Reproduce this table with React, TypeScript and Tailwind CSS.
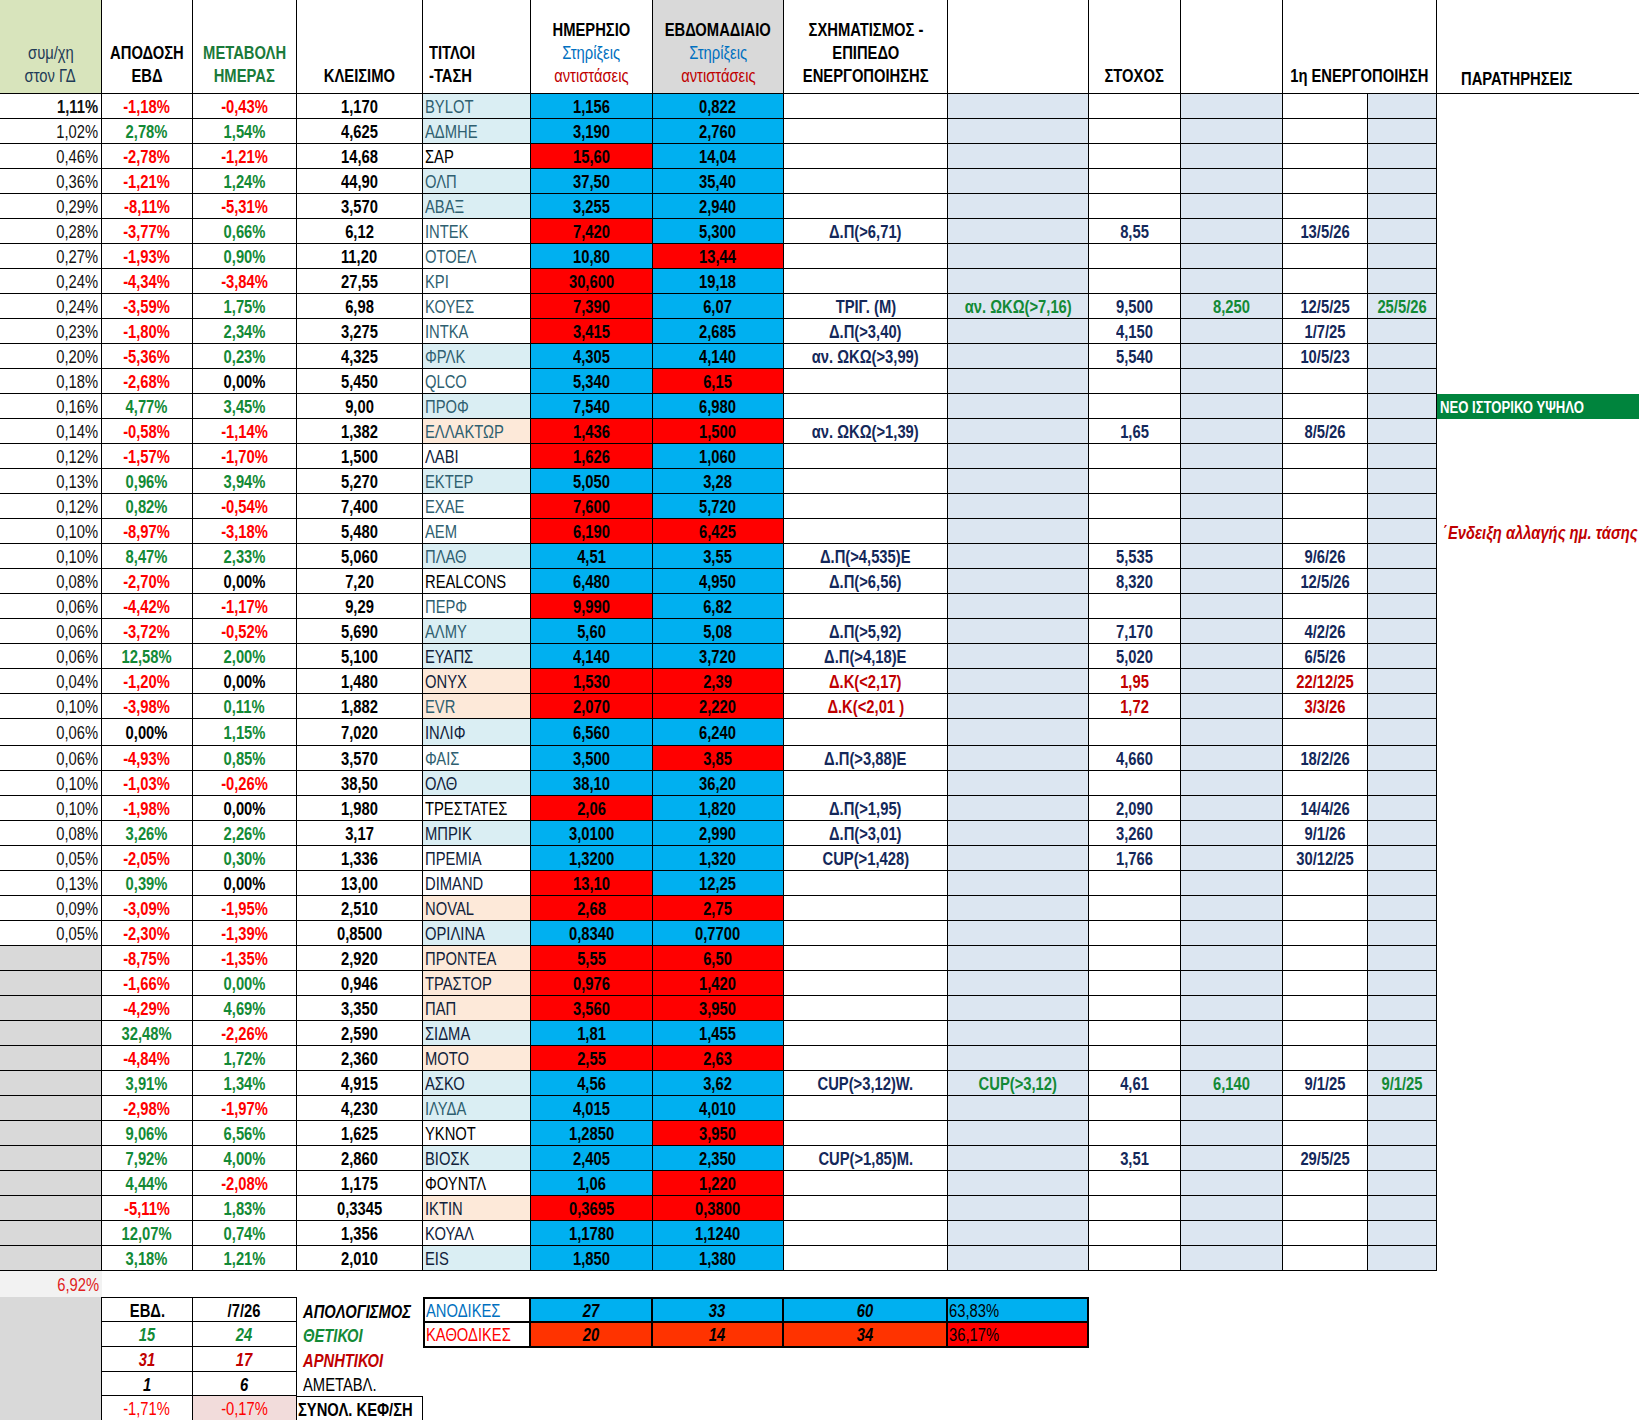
import clsx from 'clsx';

const W = [
  'w-[102px]',
  'w-[91px]',
  'w-[104px]',
  'w-[126px]',
  'w-[108px]',
  'w-[122px]',
  'w-[131px]',
  'w-[164px]',
  'w-[141px]',
  'w-[92px]',
  'w-[102px]',
  'w-[85px]',
  'w-[69px]',
];

// [συμ/χη, απόδοση, μεταβολή, κλείσιμο, τίτλος, bg+text, ημερήσιο, εβδομαδιαίο] — "!" = red cell
const rows: string[][] = [
  ['1,11%', '-1,18%', '-0,43%', '1,170', 'BYLOT', 'bt', '1,156', '0,822'],
  ['1,02%', '2,78%', '1,54%', '4,625', 'ΑΔΜΗΕ', 'bt', '3,190', '2,760'],
  ['0,46%', '-2,78%', '-1,21%', '14,68', 'ΣΑΡ', 'wk', '!15,60', '14,04'],
  ['0,36%', '-1,21%', '1,24%', '44,90', 'ΟΛΠ', 'bt', '37,50', '35,40'],
  ['0,29%', '-8,11%', '-5,31%', '3,570', 'ΑΒΑΞ', 'bt', '3,255', '2,940'],
  ['0,28%', '-3,77%', '0,66%', '6,12', 'ΙΝΤΕΚ', 'wt', '!7,420', '5,300'],
  ['0,27%', '-1,93%', '0,90%', '11,20', 'ΟΤΟΕΛ', 'wt', '10,80', '!13,44'],
  ['0,24%', '-4,34%', '-3,84%', '27,55', 'ΚΡΙ', 'wt', '!30,600', '19,18'],
  ['0,24%', '-3,59%', '1,75%', '6,98', 'ΚΟΥΕΣ', 'wt', '!7,390', '6,07'],
  ['0,23%', '-1,80%', '2,34%', '3,275', 'ΙΝΤΚΑ', 'wt', '!3,415', '2,685'],
  ['0,20%', '-5,36%', '0,23%', '4,325', 'ΦΡΛΚ', 'bt', '4,305', '4,140'],
  ['0,18%', '-2,68%', '0,00%', '5,450', 'QLCO', 'wt', '5,340', '!6,15'],
  ['0,16%', '4,77%', '3,45%', '9,00', 'ΠΡΟΦ', 'bt', '7,540', '6,980'],
  ['0,14%', '-0,58%', '-1,14%', '1,382', 'ΕΛΛΑΚΤΩΡ', 'pt', '!1,436', '!1,500'],
  ['0,12%', '-1,57%', '-1,70%', '1,500', 'ΛΑΒΙ', 'wd', '!1,626', '1,060'],
  ['0,13%', '0,96%', '3,94%', '5,270', 'ΕΚΤΕΡ', 'bt', '5,050', '3,28'],
  ['0,12%', '0,82%', '-0,54%', '7,400', 'ΕΧΑΕ', 'wt', '!7,600', '5,720'],
  ['0,10%', '-8,97%', '-3,18%', '5,480', 'ΑΕΜ', 'wt', '!6,190', '!6,425'],
  ['0,10%', '8,47%', '2,33%', '5,060', 'ΠΛΑΘ', 'bt', '4,51', '3,55'],
  ['0,08%', '-2,70%', '0,00%', '7,20', 'REALCONS', 'wk', '6,480', '4,950'],
  ['0,06%', '-4,42%', '-1,17%', '9,29', 'ΠΕΡΦ', 'wt', '!9,990', '6,82'],
  ['0,06%', '-3,72%', '-0,52%', '5,690', 'ΑΛΜΥ', 'bt', '5,60', '5,08'],
  ['0,06%', '12,58%', '2,00%', '5,100', 'ΕΥΑΠΣ', 'bd', '4,140', '3,720'],
  ['0,04%', '-1,20%', '0,00%', '1,480', 'ΟΝΥΧ', 'pd', '!1,530', '!2,39'],
  ['0,10%', '-3,98%', '0,11%', '1,882', 'EVR', 'pt', '!2,070', '!2,220'],
  ['0,06%', '0,00%', '1,15%', '7,020', 'ΙΝΛΙΦ', 'bd', '6,560', '6,240'],
  ['0,06%', '-4,93%', '0,85%', '3,570', 'ΦΑΙΣ', 'wt', '3,500', '!3,85'],
  ['0,10%', '-1,03%', '-0,26%', '38,50', 'ΟΛΘ', 'bd', '38,10', '36,20'],
  ['0,10%', '-1,98%', '0,00%', '1,980', 'ΤΡΕΣΤΑΤΕΣ', 'wk', '!2,06', '1,820'],
  ['0,08%', '3,26%', '2,26%', '3,17', 'ΜΠΡΙΚ', 'bd', '3,0100', '2,990'],
  ['0,05%', '-2,05%', '0,30%', '1,336', 'ΠΡΕΜΙΑ', 'wd', '1,3200', '1,320'],
  ['0,13%', '0,39%', '0,00%', '13,00', 'DIMAND', 'wd', '!13,10', '12,25'],
  ['0,09%', '-3,09%', '-1,95%', '2,510', 'NOVAL', 'pd', '!2,68', '!2,75'],
  ['0,05%', '-2,30%', '-1,39%', '0,8500', 'ΟΡΙΛΙΝΑ', 'bd', '0,8340', '0,7700'],
  ['', '-8,75%', '-1,35%', '2,920', 'ΠΡΟΝΤΕΑ', 'pd', '!5,55', '!6,50'],
  ['', '-1,66%', '0,00%', '0,946', 'ΤΡΑΣΤΟΡ', 'pd', '!0,976', '!1,420'],
  ['', '-4,29%', '4,69%', '3,350', 'ΠΑΠ', 'pd', '!3,560', '!3,950'],
  ['', '32,48%', '-2,26%', '2,590', 'ΣΙΔΜΑ', 'bd', '1,81', '1,455'],
  ['', '-4,84%', '1,72%', '2,360', 'ΜΟΤΟ', 'pd', '!2,55', '!2,63'],
  ['', '3,91%', '1,34%', '4,915', 'ΑΣΚΟ', 'bd', '4,56', '3,62'],
  ['', '-2,98%', '-1,97%', '4,230', 'ΙΛΥΔΑ', 'bt', '4,015', '4,010'],
  ['', '9,06%', '6,56%', '1,625', 'ΥΚΝΟΤ', 'wk', '1,2850', '!3,950'],
  ['', '7,92%', '4,00%', '2,860', 'ΒΙΟΣΚ', 'bd', '2,405', '2,350'],
  ['', '4,44%', '-2,08%', '1,175', 'ΦΟΥΝΤΛ', 'wk', '1,06', '!1,220'],
  ['', '-5,11%', '1,83%', '0,3345', 'ΙΚΤΙΝ', 'pd', '!0,3695', '!0,3800'],
  ['', '12,07%', '0,74%', '1,356', 'ΚΟΥΑΛ', 'wd', '1,1780', '1,1240'],
  ['', '3,18%', '1,21%', '2,010', 'EIS', 'bd', '1,850', '1,380'],
];

type Extra = {
  sx?: string;
  sx2?: string;
  tg?: string;
  tg2?: string;
  e1?: string;
  e2?: string;
  red?: boolean;
};

const extras: Record<string, Extra> = {
  ΙΝΤΕΚ: { sx: 'Δ.Π(>6,71)', tg: '8,55', e1: '13/5/26' },
  ΚΟΥΕΣ: { sx: 'ΤΡΙΓ. (Μ)', sx2: 'αν. ΩΚΩ(>7,16)', tg: '9,500', tg2: '8,250', e1: '12/5/25', e2: '25/5/26' },
  ΙΝΤΚΑ: { sx: 'Δ.Π(>3,40)', tg: '4,150', e1: '1/7/25' },
  ΦΡΛΚ: { sx: 'αν. ΩΚΩ(>3,99)', tg: '5,540', e1: '10/5/23' },
  ΕΛΛΑΚΤΩΡ: { sx: 'αν. ΩΚΩ(>1,39)', tg: '1,65', e1: '8/5/26' },
  ΠΛΑΘ: { sx: 'Δ.Π(>4,535)Ε', tg: '5,535', e1: '9/6/26' },
  REALCONS: { sx: 'Δ.Π(>6,56)', tg: '8,320', e1: '12/5/26' },
  ΑΛΜΥ: { sx: 'Δ.Π(>5,92)', tg: '7,170', e1: '4/2/26' },
  ΕΥΑΠΣ: { sx: 'Δ.Π(>4,18)Ε', tg: '5,020', e1: '6/5/26' },
  ΟΝΥΧ: { sx: 'Δ.Κ(<2,17)', tg: '1,95', e1: '22/12/25', red: true },
  EVR: { sx: 'Δ.Κ(<2,01 )', tg: '1,72', e1: '3/3/26', red: true },
  ΦΑΙΣ: { sx: 'Δ.Π(>3,88)Ε', tg: '4,660', e1: '18/2/26' },
  ΤΡΕΣΤΑΤΕΣ: { sx: 'Δ.Π(>1,95)', tg: '2,090', e1: '14/4/26' },
  ΜΠΡΙΚ: { sx: 'Δ.Π(>3,01)', tg: '3,260', e1: '9/1/26' },
  ΠΡΕΜΙΑ: { sx: 'CUP(>1,428)', tg: '1,766', e1: '30/12/25' },
  ΑΣΚΟ: { sx: 'CUP(>3,12)W.', sx2: 'CUP(>3,12)', tg: '4,61', tg2: '6,140', e1: '9/1/25', e2: '9/1/25' },
  ΒΙΟΣΚ: { sx: 'CUP(>1,85)Μ.', tg: '3,51', e1: '29/5/25' },
};

const pctColor = (v: string, forceGreen = false) => {
  if (v.startsWith('-')) return 'text-[#ff0000]';
  if (v === '0,00%' && !forceGreen) return 'text-black';
  return 'text-[#138a36]';
};

// narrow text: the sheet uses a condensed face, so squeeze Liberation Sans
function N({ children, o = 'c' }: { children?: React.ReactNode; o?: 'l' | 'c' | 'r' }) {
  if (children === undefined || children === '') return null;
  return (
    <span
      className={clsx(
        'inline-block whitespace-nowrap scale-x-[0.82]',
        o === 'l' ? 'origin-left' : o === 'r' ? 'origin-right' : 'origin-center',
      )}
    >
      {children}
    </span>
  );
}

function Cell({
  i,
  className,
  o = 'c',
  children,
}: {
  i: number;
  className?: string;
  o?: 'l' | 'c' | 'r';
  children?: React.ReactNode;
}) {
  return (
    <div
      className={clsx(
        W[i],
        'shrink-0 h-full pt-[2px] border-r border-b border-black flex items-center overflow-hidden whitespace-nowrap',
        o === 'l' ? 'justify-start' : o === 'r' ? 'justify-end' : 'justify-center',
        className,
      )}
    >
      <N o={o}>{children}</N>
    </div>
  );
}

function HeaderRow() {
  const h = 'shrink-0 h-full border-r border-black flex flex-col justify-end items-center leading-[23px] pb-[5px] font-bold whitespace-nowrap';
  return (
    <div className="flex h-[94px] border-b border-black">
      <div className={clsx(W[0], h, 'bg-[#d8e4bc] font-normal text-[#1f3b57]')}>
        <N>συμ/χη</N>
        <N>στον ΓΔ</N>
      </div>
      <div className={clsx(W[1], h)}>
        <N>ΑΠΟΔΟΣΗ</N>
        <N>ΕΒΔ</N>
      </div>
      <div className={clsx(W[2], h, 'text-[#1b7a3a]')}>
        <N>ΜΕΤΑΒΟΛΗ</N>
        <N>ΗΜΕΡΑΣ</N>
      </div>
      <div className={clsx(W[3], h, 'pb-[4px]')}>
        <N>ΚΛΕΙΣΙΜΟ</N>
      </div>
      <div className={clsx(W[4], h, 'items-start pl-[6px]')}>
        <N o="l">ΤΙΤΛΟΙ</N>
        <N o="l">-ΤΑΣΗ</N>
      </div>
      <div className={clsx(W[5], h)}>
        <N>ΗΜΕΡΗΣΙΟ</N>
        <span className="font-normal text-[#0070c0]">
          <N>Στηρίξεις</N>
        </span>
        <span className="font-normal text-[#c00000]">
          <N>αντιστάσεις</N>
        </span>
      </div>
      <div className={clsx(W[6], h, 'bg-[#d9d9d9]')}>
        <N>ΕΒΔΟΜΑΔΙΑΙΟ</N>
        <span className="font-normal text-[#0070c0]">
          <N>Στηρίξεις</N>
        </span>
        <span className="font-normal text-[#c00000]">
          <N>αντιστάσεις</N>
        </span>
      </div>
      <div className={clsx(W[7], h)}>
        <N>ΣΧΗΜΑΤΙΣΜΟΣ -</N>
        <N>ΕΠΙΠΕΔΟ</N>
        <N>ΕΝΕΡΓΟΠΟΙΗΣΗΣ</N>
      </div>
      <div className={clsx(W[8], h)} />
      <div className={clsx(W[9], h, 'pb-[2px]')}>
        <N>ΣΤΟΧΟΣ</N>
      </div>
      <div className={clsx(W[10], h)} />
      <div className={clsx('w-[154px]', h, 'pb-[2px]')}>
        <N>1η ΕΝΕΡΓΟΠΟΙΗΣΗ</N>
      </div>
      <div className="w-[202px] shrink-0 h-full flex flex-col justify-end items-start leading-[23px] pb-[2px] pl-[24px] font-bold">
        <N o="l">ΠΑΡΑΤΗΡΗΣΕΙΣ</N>
      </div>
    </div>
  );
}

function StockRow({ r, idx }: { r: string[]; idx: number }) {
  const [g, a, m, k, t, style, d, w] = r;
  const ex = extras[t] ?? {};
  const tb = style[0] === 'b' ? 'bg-[#daeef3]' : style[0] === 'p' ? 'bg-[#fde9d9]' : 'bg-white';
  const tc = style[1] === 't' ? 'text-[#2f5f70]' : style[1] === 'd' ? 'text-[#10213a]' : 'text-black';
  const dRed = d.startsWith('!');
  const wRed = w.startsWith('!');
  const navy = ex.red ? 'text-[#c00000]' : 'text-[#14285a]';

  return (
    <div className={clsx('flex', t === 'ΙΝΛΙΦ' ? 'h-[27px]' : 'h-[25px]')}>
      <Cell i={0} o="r" className={clsx('pr-[3px] text-[#111]', g === '' && 'bg-[#d9d9d9]', idx === 0 && 'font-bold')}>
        {g}
      </Cell>
      <Cell i={1} className={clsx('font-bold', pctColor(a))}>{a}</Cell>
      <Cell i={2} className={clsx('font-bold', pctColor(m, t === 'ΤΡΑΣΤΟΡ'))}>{m}</Cell>
      <Cell i={3} className="font-bold text-black">{k}</Cell>
      <Cell i={4} o="l" className={clsx('pl-[2px]', tb, tc)}>{t}</Cell>
      <Cell i={5} className={clsx('font-bold text-black', dRed ? 'bg-[#ff0000]' : 'bg-[#00b0f0]')}>
        {d.replace('!', '')}
      </Cell>
      <Cell i={6} className={clsx('font-bold text-black', wRed ? 'bg-[#ff0000]' : 'bg-[#00b0f0]')}>
        {w.replace('!', '')}
      </Cell>
      <Cell i={7} className={clsx('font-bold', navy)}>{ex.sx}</Cell>
      <Cell i={8} className="font-bold bg-[#dce6f1] text-[#138a36]">{ex.sx2}</Cell>
      <Cell i={9} className={clsx('font-bold', navy)}>{ex.tg}</Cell>
      <Cell i={10} className="font-bold bg-[#dce6f1] text-[#138a36]">{ex.tg2}</Cell>
      <Cell i={11} className={clsx('font-bold', navy)}>{ex.e1}</Cell>
      <Cell i={12} className="font-bold bg-[#dce6f1] text-[#138a36]">{ex.e2}</Cell>
      {t === 'ΠΡΟΦ' ? (
        <div className="w-[202px] shrink-0 h-full pt-[2px] flex items-center pl-[3px] bg-[#00843d] text-white font-bold text-[16px] whitespace-nowrap">
          <N o="l">ΝΕΟ ΙΣΤΟΡΙΚΟ ΥΨΗΛΟ</N>
        </div>
      ) : t === 'ΑΕΜ' ? (
        <div className="w-[202px] shrink-0 h-full pt-[2px] flex items-center pl-[6px] text-[#c00000] font-bold italic whitespace-nowrap overflow-hidden">
          <N o="l">΄Ενδειξη αλλαγής ημ. τάσης</N>
        </div>
      ) : (
        <div className="w-[202px] shrink-0 h-full" />
      )}
    </div>
  );
}

function Summary() {
  const box = 'shrink-0 h-full pt-[2px] border-r border-b border-black flex items-center justify-center font-bold';
  const left = [
    { a: 'ΕΒΔ.', b: '/7/26', l: 'ΑΠΟΛΟΓΙΣΜΟΣ', c: 'text-black', lc: 'text-black font-bold italic', h: 'h-[25px]', top: true },
    { a: '15', b: '24', l: 'ΘΕΤΙΚΟΙ', c: 'text-[#138a36] italic', lc: 'text-[#138a36] font-bold italic', h: 'h-[25px]' },
    { a: '31', b: '17', l: 'ΑΡΝΗΤΙΚΟΙ', c: 'text-[#c00000] italic', lc: 'text-[#c00000] font-bold italic', h: 'h-[25px]' },
    { a: '1', b: '6', l: 'ΑΜΕΤΑΒΛ.', c: 'text-black italic', lc: 'text-black', h: 'h-[24px]' },
  ];
  const num = 'shrink-0 h-full pt-[1px] border-r-2 border-black flex items-center justify-center font-bold italic';
  return (
    <div className="flex">
      <div className="flex flex-col">
        {left.map((r) => (
          <div key={r.l} className={clsx('flex', r.h)}>
            <div className={clsx(W[0], 'shrink-0 h-full bg-[#d9d9d9] border-r border-black')} />
            <div className={clsx(W[1], box, r.c, r.top && 'border-t')}>
              <N>{r.a}</N>
            </div>
            <div className={clsx(W[2], box, r.c, r.top && 'border-t')}>
              <N>{r.b}</N>
            </div>
            <div
              className={clsx(
                W[3],
                'shrink-0 h-full flex pl-[6px] whitespace-nowrap',
                r.top ? 'items-end' : 'items-center pt-[2px]',
                r.lc,
              )}
            >
              <N o="l">{r.l}</N>
            </div>
          </div>
        ))}
        <div className="flex h-[25px]">
          <div className={clsx(W[0], 'shrink-0 h-full bg-[#d9d9d9] border-r border-black')} />
          <div className={clsx(W[1], 'shrink-0 h-full pt-[2px] border-r border-b border-black flex items-center justify-center text-[#ff0000]')}>
            <N>-1,71%</N>
          </div>
          <div className={clsx(W[2], 'shrink-0 h-full pt-[2px] border-r border-b border-black flex items-center justify-center text-[#ff0000] bg-[#f2dcdb]')}>
            <N>-0,17%</N>
          </div>
          <div className={clsx(W[3], 'shrink-0 h-full pt-[2px] border-t border-r border-b border-black flex items-center pl-[1px] font-bold whitespace-nowrap')}>
            <N o="l">ΣΥΝΟΛ. ΚΕΦ/ΣΗ</N>
          </div>
        </div>
      </div>

      <div className="flex flex-col w-[666px] h-[51px] border-2 border-black">
        <div className="flex h-[24px] border-b-2 border-black">
          <div className="w-[106px] shrink-0 h-full pt-[1px] border-r-2 border-black flex items-center pl-[1px] text-[#0070c0] bg-white">
            <N o="l">ΑΝΟΔΙΚΕΣ</N>
          </div>
          <div className={clsx('w-[122px] bg-[#00b0f0]', num)}><N>27</N></div>
          <div className={clsx('w-[131px] bg-[#00b0f0]', num)}><N>33</N></div>
          <div className={clsx('w-[164px] bg-[#00b0f0]', num)}><N>60</N></div>
          <div className="flex-1 h-full pt-[1px] bg-[#00b0f0] flex items-center pl-[1px]">
            <N o="l">63,83%</N>
          </div>
        </div>
        <div className="flex flex-1">
          <div className="w-[106px] shrink-0 h-full pt-[1px] border-r-2 border-black flex items-center pl-[1px] text-[#ff0000] bg-white">
            <N o="l">ΚΑΘΟΔΙΚΕΣ</N>
          </div>
          <div className={clsx('w-[122px] bg-[#ff3300]', num)}><N>20</N></div>
          <div className={clsx('w-[131px] bg-[#ff3300]', num)}><N>14</N></div>
          <div className={clsx('w-[164px] bg-[#ff3300]', num)}><N>34</N></div>
          <div className="flex-1 h-full pt-[1px] bg-[#ff0000] flex items-center pl-[1px]">
            <N o="l">36,17%</N>
          </div>
        </div>
      </div>
    </div>
  );
}

export default function App() {
  return (
    <div className="w-[1639px] h-[1420px] overflow-hidden bg-white text-[18px] leading-[20px] text-black font-['Liberation_Sans',Arial,sans-serif]">
      <HeaderRow />
      {rows.map((r, i) => (
        <StockRow key={r[4]} r={r} idx={i} />
      ))}
      <div className="flex h-[26px]">
        <div className={clsx(W[0], 'shrink-0 h-full pt-[2px] bg-[#f2f2f2] flex items-center justify-end pr-[3px] text-[#e02020]')}>
          <N o="r">6,92%</N>
        </div>
      </div>
      <Summary />
    </div>
  );
}
